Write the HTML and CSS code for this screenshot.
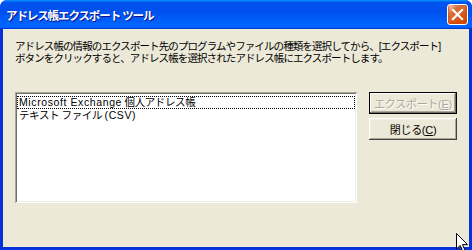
FILE: index.html
```html
<!DOCTYPE html>
<html>

<head>
  <title>アドレス帳エクスポート ツール</title>
  <link rel="stylesheet" href="styles.css">
</head>

<body>
  <div class="window">
    <div class="titlebar">
      <span class="title">アドレス帳エクスポート ツール</span>
      <button class="close" aria-label="閉じる">
        <svg width="13" height="13" viewBox="0 0 13 13">
          <path d="M2 2 L11 11 M11 2 L2 11" stroke="#fff" stroke-width="2.2" stroke-linecap="square" />
        </svg>
      </button>
    </div>

    <div class="client">
      <div class="intro">
        <div class="line">アドレス帳の情報のエクスポート先のプログラムやファイルの種類を選択してから、[エクスポート]</div>
        <div class="line">ボタンをクリックすると、アドレス帳を選択されたアドレス帳にエクスポートします。</div>
      </div>

      <div class="main">
        <div class="listbox">
          <div class="item focus"><span class="latin">Microsoft Exchange</span> 個人アドレス帳</div>
          <div class="item">テキスト ファイル <span class="latin">(CSV)</span></div>
        </div>

        <div class="buttons">
          <button class="btn default" disabled>エクスポート(<u>E</u>)</button>
          <button class="btn">閉じる(<u>C</u>)</button>
        </div>
      </div>
    </div>

    <!-- mouse pointer -->
    <svg class="cursor" width="13" height="20" viewBox="0 0 13 20">
      <path d="M0.5 0.5 L0.5 16 L4.2 12.4 L7 18.8 L9.2 17.8 L6.5 11.6 L11.5 11.6 Z" fill="#fff" stroke="#000" stroke-width="1" />
    </svg>
  </div>
</body>

</html>
```

FILE: styles.css
```css
/* Whole dialog */
body {
  margin: 0;
  font-family: "Liberation Sans", "Noto Sans CJK JP", sans-serif;
}

.window {
  position: relative;
  width: 472px;
  height: 250px;
  display: flex;
  flex-direction: column;
  background-color: #0831d9;
  border-radius: 7px 7px 0 0;
  overflow: hidden;
}

/* Blue title bar */
.titlebar {
  height: 29px;
  flex: none;
  display: flex;
  align-items: center;
  justify-content: space-between;
  padding: 0 4px 0 6px;
  background: linear-gradient(180deg, #0997ff, #0053ee 8%, #0050ee 40%, #06f 88%, #06f 93%, #005bff 95%, #003dd7 96%, #003dd7);
}

.title {
  color: #fff;
  font-size: 11.5px;
  font-weight: bold;
  letter-spacing: -1.1px;
  text-shadow: 1px 1px #0f1089;
  white-space: nowrap;
}

.close {
  width: 21px;
  height: 21px;
  padding: 0;
  display: flex;
  align-items: center;
  justify-content: center;
  border: 1px solid #fff;
  border-radius: 3px;
  background: radial-gradient(circle at 90% 90%, #cc4600 0, #dc6527 55%, #cd7546 70%, #ffccb2 90%, #fff 100%);
  box-shadow: inset 0 -1px 2px 1px #da4600;
}

/* Grey client area */
.client {
  flex: 1;
  margin: 0 3px 3px;
  padding: 11px 12px 0;
  background-color: #ece9d8;
}

.intro {
  font-size: 10.5px;
  color: #000;
}

.line {
  height: 12px;
  line-height: 12px;
  letter-spacing: -0.9px;
  white-space: nowrap;
}

.main {
  display: flex;
  gap: 12px;
  margin-top: 28px;
}

/* List of export targets */
.listbox {
  width: 342px;
  height: 111px;
  box-sizing: border-box;
  padding: 4px 2px;
  background-color: #fff;
  box-shadow: inset 1px 1px #aca899, inset -1px -1px #fff, inset 2px 2px #716f64, inset -2px -2px #f1efe2;
}

.item {
  height: 11px;
  line-height: 11px;
  padding: 0 1px;
  font-size: 10.5px;
  letter-spacing: -0.4px;
  white-space: nowrap;
  border: 1px dotted transparent;
}

.item .latin {
  letter-spacing: 0.6px;
}

.item.focus {
  border-color: #000;
}

/* Command buttons */
.buttons {
  display: flex;
  flex-direction: column;
  gap: 4px;
}

.btn {
  width: 88px;
  height: 22px;
  padding: 0;
  font-family: inherit;
  font-size: 11px;
  letter-spacing: -0.3px;
  color: #000;
  border: none;
  background-color: #ece9d8;
  box-shadow: inset -1px -1px #404040, inset 1px 1px #fff, inset -2px -2px #aca899, inset 2px 2px #f1efe2;
}

.btn.default {
  border: 1px solid #000;
  box-shadow: inset -1px -1px #716f64, inset 1px 1px #fff, inset -2px -2px #aca899;
}

.btn:disabled {
  color: #aca899;
  text-shadow: 1px 1px #fff;
}

.cursor {
  position: absolute;
  left: 456px;
  top: 233px;
}
```
